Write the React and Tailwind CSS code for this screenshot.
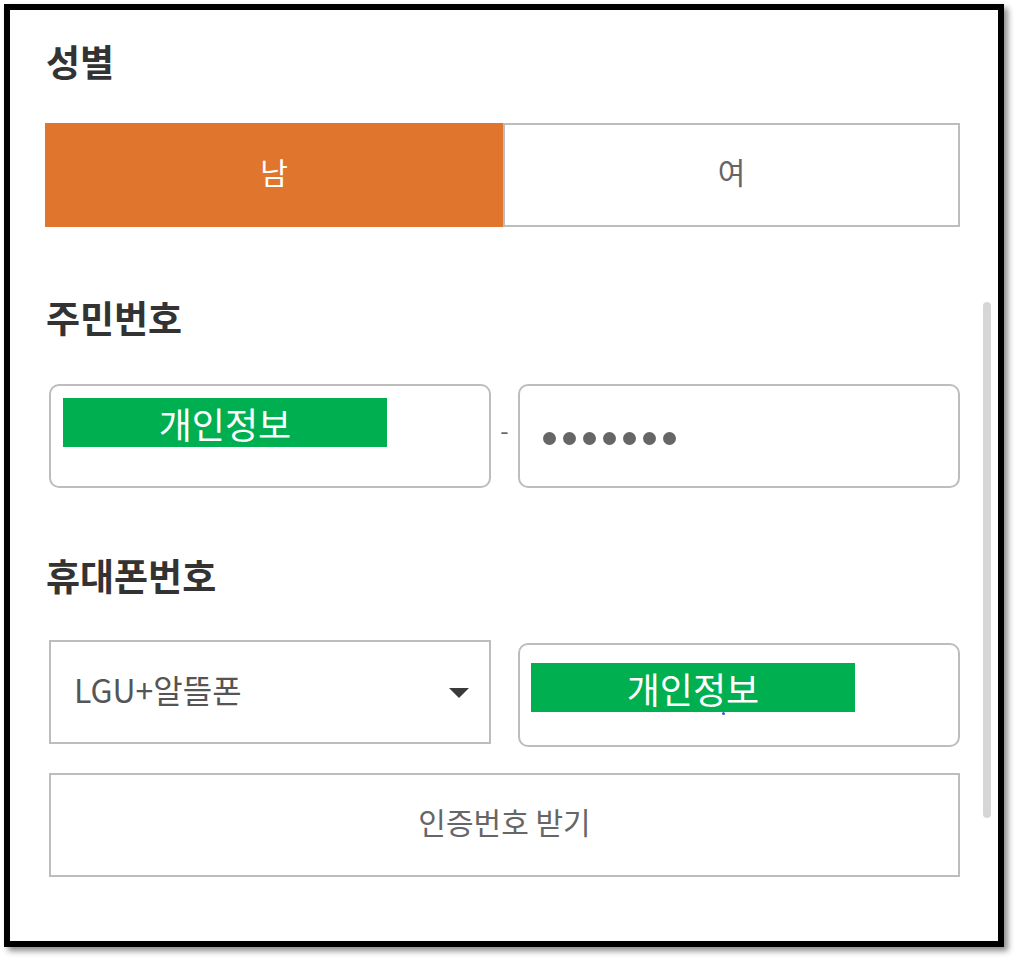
import React from "react";

const FONT = { fontFamily: '"Noto Sans CJK KR", "Noto Sans", sans-serif' };

function Heading({ children, className = "" }) {
  return (
    <div className={`pl-[1px] text-[37px] leading-[37px] font-bold text-[#333333] ${className}`}>
      {children}
    </div>
  );
}

function Masked({ className = "" }) {
  return (
    <div className={`flex h-[49px] w-[324px] items-center justify-center bg-[#00b050] text-[36px] leading-none text-white ${className}`}>
      개인정보
    </div>
  );
}

export default function App() {
  return (
    <div className="min-h-screen bg-white pt-[4px] pl-[4px]" style={FONT}>
      <div className="relative h-[943px] w-[1000px] border-[6px] border-black bg-white shadow-[4px_4px_6px_rgba(0,0,0,0.45)]">
        <div className="pl-[35px] pr-[38px] pt-[33px]">
          <Heading>성별</Heading>

          <div className="mt-[43px] flex h-[104px]">
            <div className="flex w-[458px] items-center justify-center bg-[#e0752e] pb-[8px] text-[30px] text-white">
              남
            </div>
            <div className="flex flex-1 items-center justify-center border-2 border-[#bdbdbd] pb-[8px] text-[30px] text-[#666666]">
              여
            </div>
          </div>

          <Heading className="mt-[72px]">주민번호</Heading>

          <div className="mt-[48px] ml-[4px] flex h-[104px] items-stretch">
            <div className="w-[442px] rounded-[10px] border-2 border-[#bdbdbd] pl-[12px] pt-[12px]">
              <Masked />
            </div>
            <div className="flex w-[27px] items-center justify-center pb-[12px] text-[24px] text-[#666666]">
              -
            </div>
            <div className="flex flex-1 items-center gap-[7px] rounded-[10px] border-2 border-[#bdbdbd] pl-[23px] pt-[4px]">
              {[0, 1, 2, 3, 4, 5, 6].map((i) => (
                <span key={i} className="block h-[13px] w-[13px] rounded-full bg-[#666666]" />
              ))}
            </div>
          </div>

          <Heading className="mt-[69px]">휴대폰번호</Heading>

          <div className="mt-[46px] ml-[4px] flex items-start">
            <div className="flex h-[104px] w-[442px] items-center justify-between border-2 border-[#bdbdbd] pl-[23px] pr-[20px] text-[32px] text-[#555555]">
              <span className="mb-[6px]">LGU+알뜰폰</span>
              <svg width="20" height="10" viewBox="0 0 20 10" className="mt-[2px]">
                <path d="M0 0 L20 0 L10 10 Z" fill="#3a3a3a" />
              </svg>
            </div>
            <div className="relative ml-[27px] mt-[3px] h-[104px] flex-1 rounded-[10px] border-2 border-[#bdbdbd] pl-[11px] pt-[18px]">
              <span className="absolute left-[202px] top-[67px] h-[3px] w-[3px] rounded-full bg-[#3b55e6]" />
              <Masked className="relative" />
            </div>
          </div>

          <div className="mt-[26px] ml-[4px] flex h-[104px] items-center justify-center border-2 border-[#bdbdbd] pb-[8px] text-[30px] text-[#666666]">
            인증번호 받기
          </div>
        </div>

        <div className="absolute left-[973px] top-[292px] h-[516px] w-[8px] rounded-full bg-[#d6d6d6]" />
      </div>
    </div>
  );
}
